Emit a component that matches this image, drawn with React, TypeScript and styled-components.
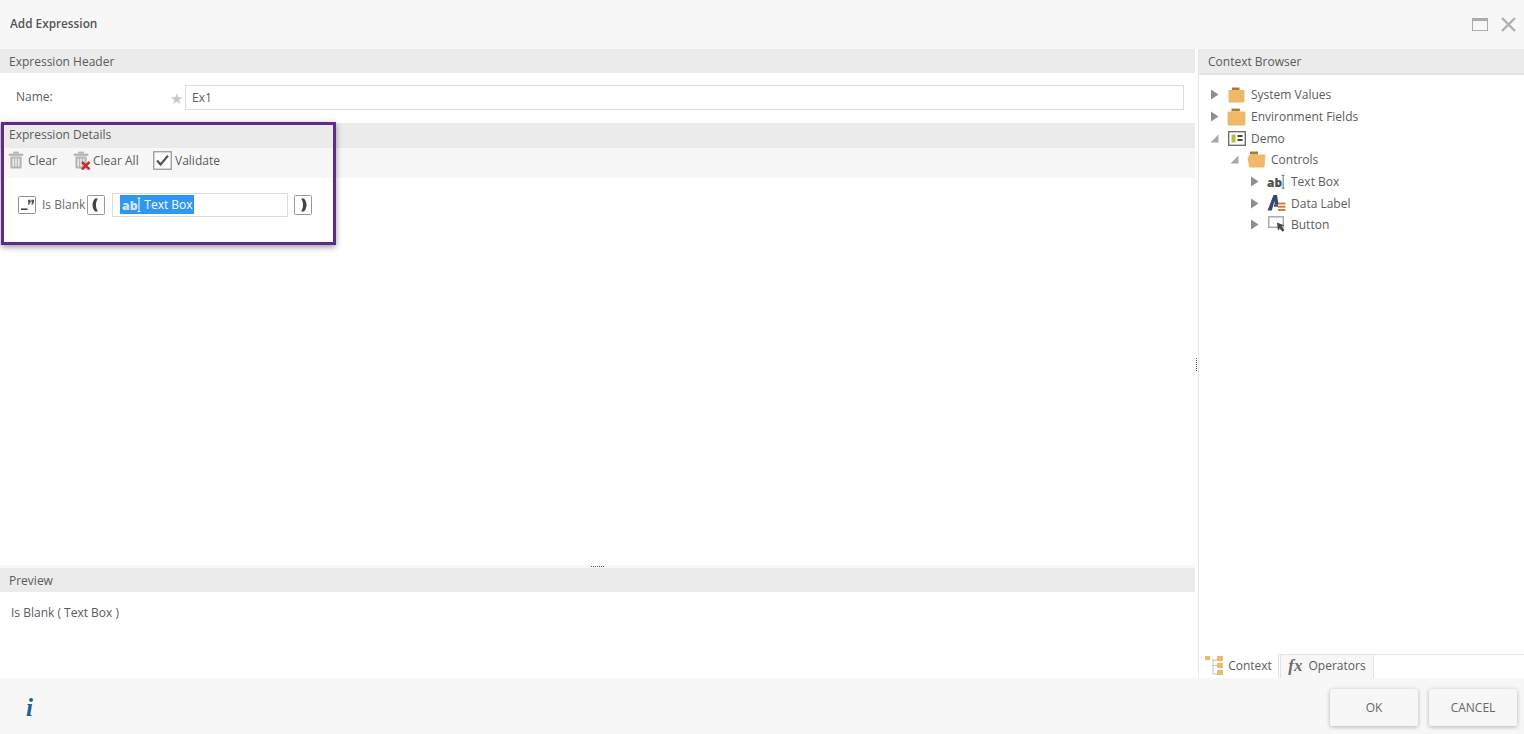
import React from 'react';
import styled, { createGlobalStyle } from 'styled-components';

const GlobalStyle = createGlobalStyle`
    html, body {
        margin: 0;
        padding: 0;
        background: #fff;
        overflow: hidden;
    }
    body {
        font-family: "Open Sans", "Liberation Sans", sans-serif;
        font-size: 12px;
        color: #5c5c5c;
    }
`

const TrashIcon = () => (
    <svg width="16" height="18" viewBox="0 0 16 18">
        <path d="M5.5 2.5V1h5v1.5M1 3h14v1.4H1z" fill="#b5b5b5" stroke="#b5b5b5" strokeWidth="0.8" />
        <path d="M2.4 5.6h11.2V16a1.5 1.5 0 0 1-1.5 1.5H3.9A1.5 1.5 0 0 1 2.4 16z" fill="#b5b5b5" />
        <path d="M5.2 7.4v8M8 7.4v8M10.8 7.4v8" stroke="#f7f7f7" strokeWidth="1.3" />
    </svg>
)

const TrashXIcon = () => (
    <svg width="18" height="19" viewBox="0 0 18 19">
        <path d="M5.5 2.5V1h5v1.5M1 3h14v1.4H1z" fill="#b5b5b5" stroke="#b5b5b5" strokeWidth="0.8" />
        <path d="M2.4 5.6h11.2V16a1.5 1.5 0 0 1-1.5 1.5H3.9A1.5 1.5 0 0 1 2.4 16z" fill="#b5b5b5" />
        <path d="M5.2 7.4v8M8 7.4v8M10.8 7.4v8" stroke="#f7f7f7" strokeWidth="1.3" />
        <path d="M9 11l7.5 7.5M16.500 11L9 18.500" stroke="#c8302c" strokeWidth="2.600" />
    </svg>
)

const CheckIcon = () => (
    <svg width="19" height="19" viewBox="0 0 19 19">
        <rect x="0.750" y="0.750" width="17.500" height="17.500" fill="#fdfdfd" stroke="#9a9a9a" strokeWidth="1.300" />
        <path d="M4 9.500l3.600 4L15 4.600" fill="none" stroke="#555" strokeWidth="2.200" />
    </svg>
)

const QuoteIcon = () => (
    <svg width="18" height="18" viewBox="0 0 18 18">
        <rect x="0.500" y="0.500" width="17" height="17" rx="1" fill="#fff" stroke="#8f8f8f" />
        <path d="M3 13.200h6.500" stroke="#444" strokeWidth="1.600" />
        <path d="M10 3.800h2.600v2.400l-1.400 2.600H9.900l.8-2.400H10zM13.400 3.800H16v2.400l-1.400 2.600h-1.300l.8-2.400h-.7z" fill="#555" />
    </svg>
)

const BracketIcon = ({ flip }: { flip?: boolean }) => (
    <svg width="18" height="20" viewBox="0 0 18 20">
        <rect x="0.500" y="0.500" width="17" height="19" rx="1" fill="#fff" stroke="#9a9a9a" />
        <path
            d={flip
                ? 'M10 3.500H7C8.800 6 9 8 9 10s-.2 4-2 6.500h3c2-2.500 2.500-4.500 2.500-6.500S12 6 10 3.500z'
                : 'M8 3.500h3C9.200 6 9 8 9 10s.2 4 2 6.500H8C6 14 5.500 12 5.500 10S6 6 8 3.500z'}
            fill="#444"
        />
    </svg>
)

const FolderIcon = ({ big }: { big?: boolean }) => (
    <svg width={big ? 19 : 17} height={big ? 18 : 16} viewBox="0 0 17 16">
        <path d="M4 0.500h7.500V3H4z" fill="#a9773d" />
        <path d="M0.500 3h16v11.500a1 1 0 0 1-1 1h-14a1 1 0 0 1-1-1z" fill="#eeb968" />
    </svg>
)

const FormIcon = () => (
    <svg width="18" height="15" viewBox="0 0 18 15">
        <rect x="0.700" y="0.700" width="16.600" height="13.600" fill="#fff" stroke="#666" strokeWidth="1.300" />
        <rect x="3.500" y="3.500" width="4" height="8" fill="#b5bb3c" />
        <path d="M9.500 5h5M9.500 9h5" stroke="#444" strokeWidth="1.800" />
    </svg>
)

const ControlsFolderIcon = () => (
    <svg width="19" height="17" viewBox="0 0 19 17">
        <path d="M3 0.500h8V3.500H3z" fill="#a9773d" />
        <path d="M3 3.500h15.500l-1 12a1 1 0 0 1-1 1h-13a1.500 1.500 0 0 1-1.500-1.500L0.500 7z" fill="#eeb968" />
    </svg>
)

const TextBoxIcon = ({ light }: { light?: boolean }) => (
    <svg width="20" height="18" viewBox="0 0 20 18">
        <text
            x="0"
            y="14"
            fontFamily="'Open Sans', sans-serif"
            fontWeight="800"
            fontSize="12.500"
            fill={light ? '#cfe6fb' : '#4a4f57'}
        >
            ab
        </text>
        <path
            d="M15.500 2h3M17 2v13.500M15.500 15.500h3"
            fill="none"
            stroke={light ? '#fff' : '#3f6f9c'}
            strokeWidth="1"
        />
    </svg>
)

const DataLabelIcon = () => (
    <svg width="19" height="18" viewBox="0 0 19 18">
        <path d="M0.500 16.500L6.500 1h3.500l1.500 9.500H7.700l-.2-3.500-2.700 9.500z" fill="#39476b" />
        <path d="M7 10.500h4v2.200H7z" fill="#39476b" />
        <path d="M11 9.500h7.500M11 12.700h7.500M11 16h7.500" stroke="#c9853d" strokeWidth="2" />
    </svg>
)

const ButtonIcon = () => (
    <svg width="18" height="17" viewBox="0 0 18 17">
        <rect x="0.800" y="0.800" width="14.500" height="10.500" fill="#fff" stroke="#ababab" strokeWidth="1.500" />
        <path d="M9 6.500l7.500 3-3 1 3 3.500-2 1.800-2.800-3.300-1.800 2.300z" fill="#47494d" />
    </svg>
)

const ContextTabIcon = () => (
    <svg width="19" height="20" viewBox="0 0 19 20">
        <path d="M0 1h5v4H0zM12 1h6v5h-6zM12 8h6v5h-6zM12 15h6v5h-6z" fill="#eeb968" />
        <path d="M8 4v15h4M8 10.500h4M8 5h4" fill="none" stroke="#c3c3c3" strokeWidth="1" />
    </svg>
)

const MaximizeIcon = () => (
    <svg width="16" height="13" viewBox="0 0 16 13">
        <rect x="0.500" y="0.500" width="15" height="12" fill="none" stroke="#acacac" />
        <rect x="0" y="0" width="16" height="3" fill="#acacac" />
    </svg>
)

const CloseIcon = () => (
    <svg width="15" height="15" viewBox="0 0 15 15">
        <path d="M1 1l13 13M14 1L1 14" stroke="#b0b0b0" strokeWidth="2.400" />
    </svg>
)

const Caret = ({ open }: { open?: boolean }) => (
    <svg width="9" height="11" viewBox="0 0 9 11">
        {open
            ? <path d="M8.500 1.500v8H0.500z" fill="#a8a8a8" />
            : <path d="M1 0.500l7.500 5L1 10.500z" fill="#8e8e8e" />}
    </svg>
)

type TreeNode = {
    label: string
    level: number
    open?: boolean
    icon: React.ReactNode
}

const treeNodes: TreeNode[] = [
    { label: 'System Values', level: 0, icon: <FolderIcon /> },
    { label: 'Environment Fields', level: 0, icon: <FolderIcon big /> },
    { label: 'Demo', level: 0, open: true, icon: <FormIcon /> },
    { label: 'Controls', level: 1, open: true, icon: <ControlsFolderIcon /> },
    { label: 'Text Box', level: 2, icon: <TextBoxIcon /> },
    { label: 'Data Label', level: 2, icon: <DataLabelIcon /> },
    { label: 'Button', level: 2, icon: <ButtonIcon /> },
]

export default function App() {
    return (
        <Dialog>
            <GlobalStyle />
            <TitleBar>
                <Title>Add Expression</Title>
                <WindowControls>
                    <MaximizeIcon />
                    <CloseIcon />
                </WindowControls>
            </TitleBar>

            <Body>
                <LeftPane>
                    <SectionHeader>Expression Header</SectionHeader>
                    <NameRow>
                        <NameLabel>Name:</NameLabel>
                        <Required>★</Required>
                        <NameInput>Ex1</NameInput>
                    </NameRow>

                    <SectionHeader $height={25} $lift={2}>Expression Details</SectionHeader>
                    <Toolbar>
                        <ToolButton $width={65} $gap={4}><TrashIcon />Clear</ToolButton>
                        <ToolButton $width={80} $gap={2}><TrashXIcon />Clear All</ToolButton>
                        <ToolButton $gap={3}><CheckIcon />Validate</ToolButton>
                    </Toolbar>
                    <Canvas>
                        <ExpressionRow>
                            <QuoteIcon />
                            <FunctionName>Is Blank</FunctionName>
                            <BracketIcon />
                            <TokenField>
                                <Token><TextBoxIcon light />Text Box</Token>
                            </TokenField>
                            <BracketIcon flip />
                        </ExpressionRow>
                    </Canvas>

                    <HorizontalSplitter><GripDots /></HorizontalSplitter>

                    <SectionHeader>Preview</SectionHeader>
                    <PreviewBody>Is Blank ( Text Box )</PreviewBody>
                </LeftPane>

                <VerticalSplitter><GripDotsVertical /></VerticalSplitter>

                <RightPane>
                    <BrowserHeader>Context Browser</BrowserHeader>
                    <Tree>
                        {treeNodes.map(node => (
                            <TreeRow key={node.label} $level={node.level}>
                                <CaretSlot><Caret open={node.open} /></CaretSlot>
                                <TreeIcon>{node.icon}</TreeIcon>
                                <span>{node.label}</span>
                            </TreeRow>
                        ))}
                    </Tree>
                    <Tabs>
                        <Tab $active $width={80}><ContextTabIcon />Context</Tab>
                        <Tab $width={94}><FxGlyph>fx</FxGlyph>Operators</Tab>
                    </Tabs>
                </RightPane>
            </Body>

            <Footer>
                <InfoGlyph>i</InfoGlyph>
                <FooterButtons>
                    <FooterButton>OK</FooterButton>
                    <FooterButton>CANCEL</FooterButton>
                </FooterButtons>
            </Footer>

            <Highlight />
        </Dialog>
    );
}

const Dialog = styled.div`
    position: relative;
    display: flex;
    flex-direction: column;
    width: 1524px;
    height: 734px;
    background: #fff;
    overflow: hidden;
`

const TitleBar = styled.div`
    flex: 0 0 49px;
    display: flex;
    align-items: center;
    justify-content: space-between;
    padding: 0 8px 3px 10px;
    box-sizing: border-box;
    background: #f7f7f7;
`

const Title = styled.div`
    font-size: 11.800px;
    font-weight: 600;
    color: #555;
`

const WindowControls = styled.div`
    display: flex;
    align-items: center;
    gap: 13px;
    margin-top: 3px;
`

const Body = styled.div`
    flex: 1;
    display: flex;
    min-height: 0;
`

const LeftPane = styled.div`
    flex: 0 0 1195px;
    display: flex;
    flex-direction: column;
`

const SectionHeader = styled.div<{ $height?: number; $lift?: number }>`
    flex: 0 0 ${props => props.$height || 24}px;
    display: flex;
    align-items: center;
    padding: 0 0 ${props => props.$lift || 0}px 9px;
    box-sizing: border-box;
    background: #ebebeb;
    color: #5a5a5a;
`

const NameRow = styled.div`
    flex: 0 0 50px;
    display: flex;
    align-items: flex-start;
    padding: 12px 11px 0 16px;
    box-sizing: border-box;
`

const NameLabel = styled.div`
    width: 154px;
    line-height: 24px;
`

const Required = styled.div`
    width: 15px;
    margin-top: 1px;
    line-height: 24px;
    font-size: 15px;
    color: #c9c9c9;
`

const NameInput = styled.div`
    flex: 1;
    height: 25px;
    padding-left: 6px;
    box-sizing: border-box;
    border: 1px solid #dcdcdc;
    line-height: 24px;
`

const Toolbar = styled.div`
    flex: 0 0 30px;
    display: flex;
    align-items: center;
    padding: 0 0 6px 8px;
    box-sizing: border-box;
    background: #f7f7f7;
`

const ToolButton = styled.div<{ $width?: number; $gap: number }>`
    display: flex;
    align-items: center;
    gap: ${props => props.$gap}px;
    width: ${props => (props.$width ? `${props.$width}px` : 'auto')};
`

const Canvas = styled.div`
    flex: 1;
    padding: 15px 0 0 18px;
`

const ExpressionRow = styled.div`
    display: flex;
    align-items: center;
    height: 24px;
`

const FunctionName = styled.div`
    margin: -2px 2px 0 6px;
    color: #6a6a6a;
`

const TokenField = styled.div`
    width: 176px;
    height: 24px;
    margin: 0 6px 0 7px;
    padding: 1px 0 0 7px;
    box-sizing: border-box;
    border: 1px solid #dcdcdc;
`

const Token = styled.div`
    display: inline-flex;
    align-items: center;
    gap: 2px;
    height: 19px;
    padding: 0 1px 0 2px;
    background: #2f97f0;
    color: #fff;
    white-space: nowrap;
`

const HorizontalSplitter = styled.div`
    flex: 0 0 3px;
    display: flex;
    justify-content: center;
    background: #f7f7f7;
`

const GripDots = styled.div`
    width: 14px;
    height: 1px;
    margin: 1px 0 0 0;
    background: repeating-linear-gradient(90deg, #555 0 1px, transparent 1px 2px);
`

const PreviewBody = styled.div`
    flex: 0 0 86px;
    padding: 12px 11px;
    box-sizing: border-box;
    line-height: 18px;
`

const VerticalSplitter = styled.div`
    flex: 0 0 3px;
    display: flex;
    align-items: center;
    justify-content: center;
    padding-top: 3px;
    box-sizing: border-box;
`

const GripDotsVertical = styled.div`
    width: 1px;
    height: 14px;
    background: repeating-linear-gradient(180deg, #555 0 1px, transparent 1px 2px);
`

const RightPane = styled.div`
    flex: 1;
    display: flex;
    flex-direction: column;
    border-left: 1px solid #e6e6e6;
`

const BrowserHeader = styled.div`
    flex: 0 0 26px;
    display: flex;
    align-items: center;
    padding-left: 9px;
    box-sizing: border-box;
    background: #ebebeb;
    border-bottom: 2px solid #e3e3e3;
    color: #5a5a5a;
`

const Tree = styled.div`
    flex: 1;
    padding-top: 9px;
`

const TreeRow = styled.div<{ $level: number }>`
    display: flex;
    align-items: center;
    height: 21.700px;
    padding-left: ${props => 11 + props.$level * 20}px;
`

const CaretSlot = styled.div`
    display: flex;
    width: 17px;
`

const TreeIcon = styled.div`
    display: flex;
    align-items: center;
    justify-content: center;
    width: 19px;
    margin-right: 5px;
`

const Tabs = styled.div`
    flex: 0 0 24px;
    display: flex;
    align-items: stretch;
    box-sizing: border-box;
    border-top: 1px solid #e3e3e3;
`

const Tab = styled.div<{ $active?: boolean; $width: number }>`
    display: flex;
    align-items: center;
    justify-content: center;
    gap: 4px;
    width: ${props => props.$width}px;
    margin-right: 1px;
    margin-top: ${props => (props.$active ? '-1px' : '0')};
    padding-bottom: 2px;
    box-sizing: border-box;
    background: ${props => (props.$active ? '#fff' : '#f7f7f7')};
    border-right: 1px solid #e3e3e3;
    border-left: ${props => (props.$active ? 'none' : '1px solid #e3e3e3')};
`

const FxGlyph = styled.span`
    margin-right: 2px;
    font-family: "Liberation Serif", serif;
    font-size: 17px;
    font-style: italic;
    font-weight: 700;
    color: #6b6b6b;
`

const Footer = styled.div`
    flex: 0 0 56px;
    display: flex;
    align-items: center;
    justify-content: space-between;
    padding: 0 7px 0 26px;
    box-sizing: border-box;
    background: #f7f7f7;
`

const InfoGlyph = styled.div`
    margin-top: 4px;
    font-family: "Liberation Serif", serif;
    font-size: 25px;
    font-style: italic;
    font-weight: 700;
    color: #1f5f92;
`

const FooterButtons = styled.div`
    display: flex;
    gap: 11px;
    margin-top: 3px;
`

const FooterButton = styled.div`
    display: flex;
    align-items: center;
    justify-content: center;
    width: 88px;
    height: 37px;
    border-radius: 2px;
    background: #f7f7f7;
    box-shadow: 0 1px 4px rgba(0, 0, 0, 0.28);
    color: #666;
`

const Highlight = styled.div`
    position: absolute;
    left: 1px;
    top: 122px;
    width: 335px;
    height: 123px;
    box-sizing: border-box;
    border: 3px solid #5f2a8a;
    box-shadow: 0 2px 6px rgba(0, 0, 0, 0.4);
    pointer-events: none;
`
